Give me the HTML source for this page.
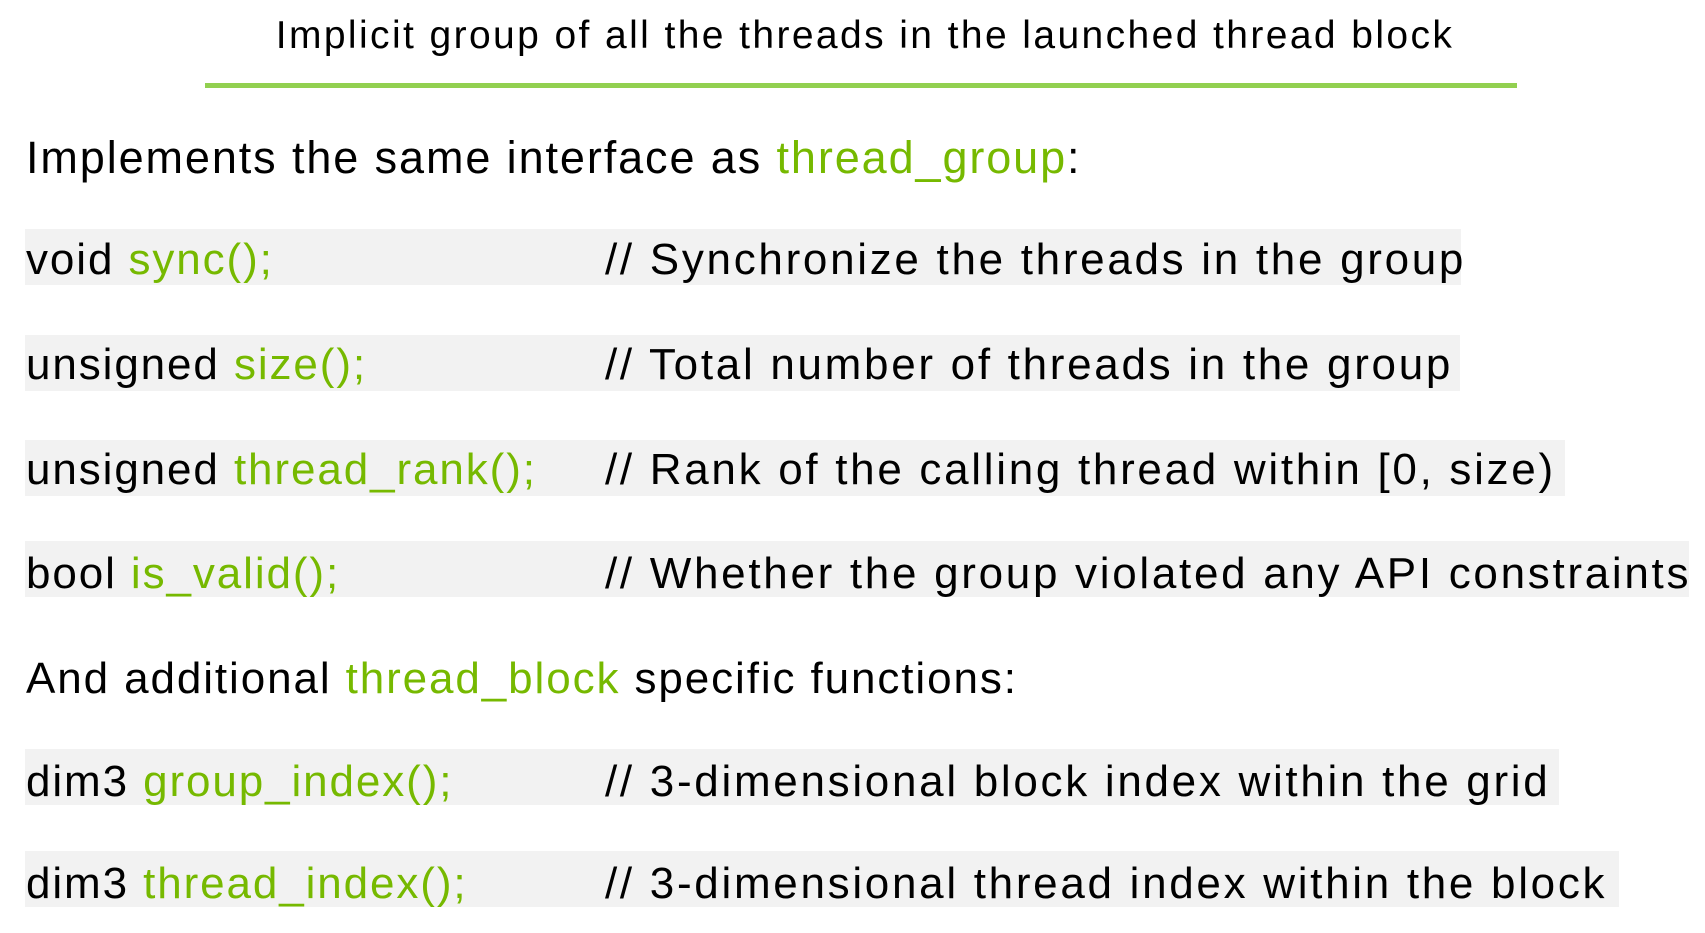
<!DOCTYPE html>
<html><head><meta charset="utf-8"><style>
body{margin:0;width:1705px;height:933px;background:#fff;position:relative;overflow:hidden;font-family:"Liberation Sans",sans-serif;color:#000}
.t{position:absolute;white-space:nowrap;line-height:1}
.g{color:#76b900}
.box{position:absolute;left:25px;background:#f2f2f2;height:56px}
.c{position:absolute;left:605px;white-space:nowrap;line-height:1;font-size:44px;letter-spacing:2.7px}
.l{position:absolute;left:26px;white-space:nowrap;line-height:1;font-size:44px;letter-spacing:1.9px}
</style></head><body>
<div class="t" style="left:0;width:1730px;text-align:center;top:16px;font-size:39px;letter-spacing:2.4px">Implicit group of all the threads in the launched thread block</div>
<div style="position:absolute;left:205px;top:83px;width:1312px;height:5px;background:#92d050"></div>
<div class="l" style="top:135px;font-size:45px">Implements the same interface as <span class="g">thread_group</span>:</div>

<div class="box" style="top:229px;width:1436px"></div>
<div class="l" style="top:238px">void <span class="g">sync();</span></div>
<div class="c" style="top:238px">// Synchronize the threads in the group</div>

<div class="box" style="top:335px;width:1435px"></div>
<div class="l" style="top:343px">unsigned <span class="g">size();</span></div>
<div class="c" style="top:343px">// Total number of threads in the group</div>

<div class="box" style="top:440px;width:1540px"></div>
<div class="l" style="top:448px">unsigned <span class="g">thread_rank();</span></div>
<div class="c" style="top:448px">// Rank of the calling thread within [0, size)</div>

<div class="box" style="top:541px;width:1664px"></div>
<div class="l" style="top:552px">bool <span class="g">is_valid();</span></div>
<div class="c" style="top:552px">// Whether the group violated any API constraints</div>

<div class="l" style="top:657px">And additional <span class="g">thread_block</span> specific functions:</div>

<div class="box" style="top:749px;width:1534px"></div>
<div class="l" style="top:760px">dim3 <span class="g">group_index();</span></div>
<div class="c" style="top:760px">// 3-dimensional block index within the grid</div>

<div class="box" style="top:851px;width:1594px"></div>
<div class="l" style="top:862px">dim3 <span class="g">thread_index();</span></div>
<div class="c" style="top:862px">// 3-dimensional thread index within the block</div>
</body></html>
